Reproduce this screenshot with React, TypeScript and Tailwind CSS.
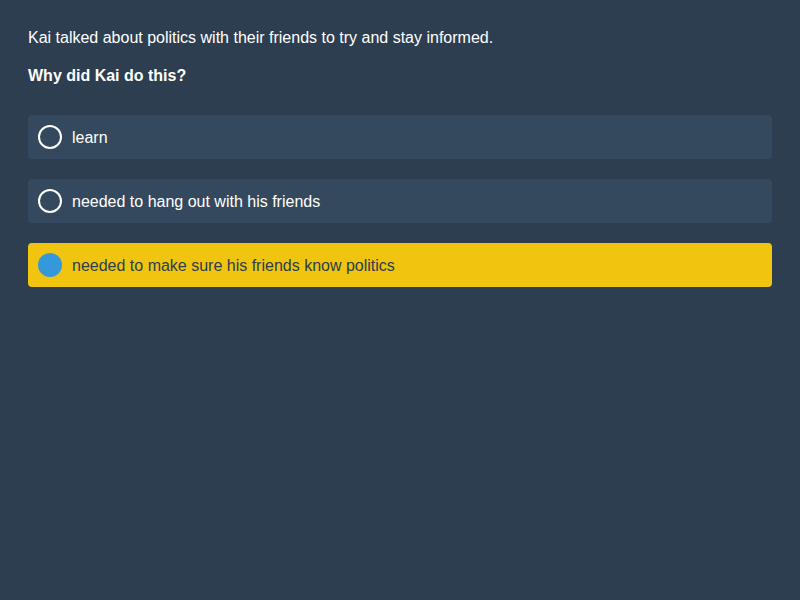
import React from "react";

const options = [
  { text: "learn", selected: false },
  { text: "needed to hang out with his friends", selected: false },
  { text: "needed to make sure his friends know politics", selected: true },
];

export default function App() {
  return (
    <div className="w-[800px] h-[600px] bg-[#2c3e50] p-[28px] font-['Liberation_Sans',Arial,sans-serif] text-white">
      <p className="text-[16px] leading-[20px]">
        Kai talked about politics with their friends to try and stay informed.
      </p>
      <p className="mt-[18px] text-[16px] leading-[20px] font-bold">Why did Kai do this?</p>
      <div className="mt-[29px] flex flex-col gap-[20px]">
        {options.map((o) => (
          <div
            key={o.text}
            className={
              o.selected
                ? "h-[44px] rounded-[4px] bg-[#f1c40f] flex items-center px-[10px] gap-[10px] text-[#2c3e50]"
                : "h-[44px] rounded-[4px] bg-[#34495e] flex items-center px-[10px] gap-[10px] text-white"
            }
          >
            {o.selected ? (
              <span className="w-[24px] h-[24px] rounded-full bg-[#3498db] shrink-0" />
            ) : (
              <span className="w-[24px] h-[24px] rounded-full border-2 border-white shrink-0" />
            )}
            <span className="text-[16px] leading-[20px] pt-[2px]">{o.text}</span>
          </div>
        ))}
      </div>
    </div>
  );
}
